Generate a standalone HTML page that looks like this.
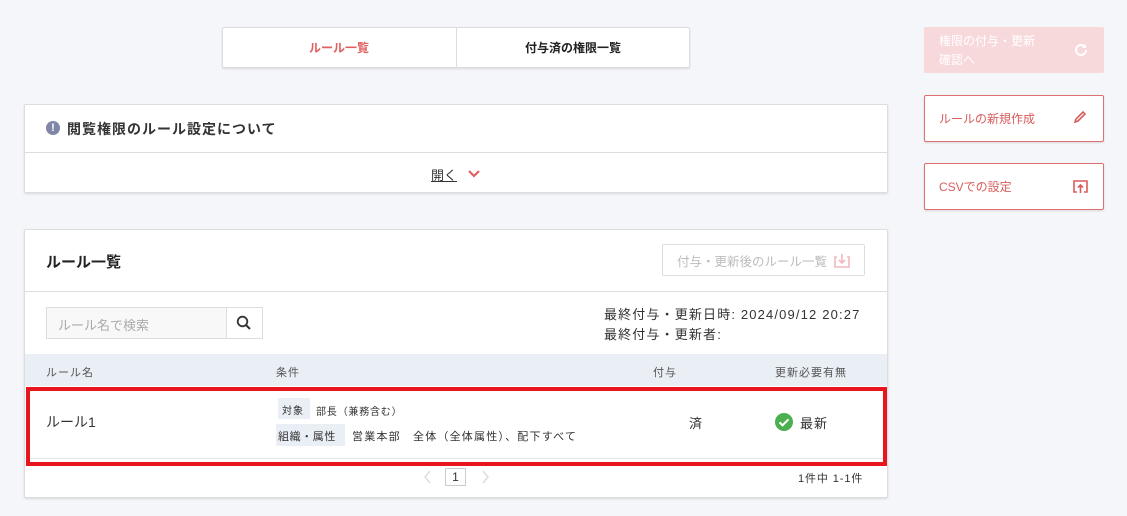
<!DOCTYPE html>
<html><head><meta charset="utf-8"><style>
*{box-sizing:border-box;margin:0;padding:0}
body{width:1127px;height:516px;background:#f5f6fa;font-family:"Liberation Sans","Noto Sans CJK JP",sans-serif;color:#333;position:relative;overflow:hidden;font-size:13px}
.a{position:absolute}
.card{position:absolute;background:#fff;border:1px solid #ddd;box-shadow:0 1px 2px rgba(0,0,0,.12);border-radius:2px}
.t{position:absolute;white-space:nowrap}
</style></head><body>
<div class="card" style="left:222px;top:27px;width:468px;height:41px"></div>
<div class="a" style="left:456px;top:28px;width:1px;height:39px;background:#ddd"></div>
<div class="t" style="left:222px;top:39px;width:234px;text-align:center;color:#e06060;font-size:12px;font-weight:bold">ルール一覧</div>
<div class="t" style="left:456px;top:39px;width:234px;text-align:center;color:#222;font-size:12px;font-weight:bold">付与済の権限一覧</div>

<div class="card" style="left:24px;top:104px;width:864px;height:89px"></div>
<div class="a" style="left:25px;top:152px;width:862px;height:1px;background:#ddd"></div>
<div class="a" style="left:46px;top:121px;width:14px;height:14px;border-radius:50%;background:#7f86a8;color:#fff;font-size:11px;font-weight:bold;text-align:center;line-height:14px">!</div>
<div class="t" style="left:67px;top:119px;font-size:14px;font-weight:bold;letter-spacing:1px;color:#333">閲覧権限のルール設定について</div>
<div class="t" style="left:431px;top:165px;font-size:13px;text-decoration:underline;color:#333">開く</div>
<svg class="a" style="left:467px;top:169px" width="14" height="9" viewBox="0 0 14 9"><path d="M2 2l5 5 5-5" stroke="#e06060" stroke-width="2.2" fill="none"/></svg>

<div class="card" style="left:24px;top:229px;width:864px;height:269px"></div>
<div class="t" style="left:46px;top:251px;font-size:15px;font-weight:bold;color:#222">ルール一覧</div>
<div class="a" style="left:662px;top:244px;width:203px;height:32px;border:1px solid #ddd;border-radius:2px;background:#fff"></div>
<div class="t" style="left:677px;top:251px;font-size:12.5px;color:#bbb">付与・更新後のルール一覧</div>
<svg class="a" style="left:834px;top:252px" width="16" height="16" viewBox="0 0 16 16"><path d="M3 5H1v10h14V5h-2M8 2v9M5 8l3 3 3-3" stroke="#f2b8bc" stroke-width="1.6" fill="none"/></svg>
<div class="a" style="left:25px;top:291px;width:862px;height:1px;background:#ddd"></div>
<div class="a" style="left:46px;top:307px;width:181px;height:32px;border:1px solid #ddd;background:#f8f8f8"></div>
<div class="t" style="left:58px;top:315px;font-size:13px;color:#aaa">ルール名で検索</div>
<div class="a" style="left:226px;top:307px;width:37px;height:32px;border:1px solid #ddd;background:#fff"></div>
<svg class="a" style="left:236px;top:315px" width="16" height="16" viewBox="0 0 16 16"><circle cx="6.5" cy="6.5" r="4.8" stroke="#333" stroke-width="1.8" fill="none"/><path d="M10 10l4 4" stroke="#333" stroke-width="2"/></svg>
<div class="t" style="left:604px;top:304px;font-size:13px;letter-spacing:1.15px;color:#333">最終付与・更新日時: 2024/09/12 20:27</div>
<div class="t" style="left:604px;top:324px;font-size:13px;letter-spacing:1.15px;color:#333">最終付与・更新者:</div>
<div class="a" style="left:25px;top:354px;width:862px;height:32px;background:#eaeef5"></div>
<div class="t" style="left:46px;top:364px;font-size:11px;color:#555;letter-spacing:1px">ルール名</div>
<div class="t" style="left:276px;top:364px;font-size:11px;color:#555;letter-spacing:1px">条件</div>
<div class="t" style="left:653px;top:364px;font-size:11px;color:#555;letter-spacing:1px">付与</div>
<div class="t" style="left:775px;top:364px;font-size:11px;color:#555;letter-spacing:1px">更新必要有無</div>
<div class="a" style="left:25px;top:458px;width:862px;height:1px;background:#e6e6e6"></div>
<div class="t" style="left:46px;top:412px;font-size:14px;color:#333">ルール1</div>
<div class="a" style="left:278px;top:398px;width:32px;height:21px;background:#eaeef5"></div>
<div class="t" style="left:282px;top:402px;font-size:10px;color:#333;letter-spacing:1px">対象</div>
<div class="t" style="left:316px;top:403px;font-size:10px;color:#333;letter-spacing:.8px">部長（兼務含む）</div>
<div class="a" style="left:276px;top:424px;width:69px;height:22px;background:#eaeef5"></div>
<div class="t" style="left:278px;top:428px;font-size:11px;color:#333;letter-spacing:.6px">組織・属性</div>
<div class="t" style="left:352px;top:428px;font-size:11px;color:#333;letter-spacing:1.2px">営業本部　全体（全体属性）、配下すべて</div>
<div class="t" style="left:689px;top:413px;font-size:13px;color:#333">済</div>
<svg class="a" style="left:775px;top:413px" width="18" height="18" viewBox="0 0 18 18"><circle cx="9" cy="9" r="9" fill="#4caf50"/><path d="M4.5 9.3l3 3 6-6" stroke="#fff" stroke-width="2" fill="none"/></svg>
<div class="t" style="left:800px;top:413px;font-size:13px;color:#333;letter-spacing:1px">最新</div>
<div class="a" style="left:26px;top:387px;width:861px;height:79px;border:4px solid #e8141e"></div>
<svg class="a" style="left:423px;top:470px" width="10" height="14" viewBox="0 0 10 14"><path d="M7 1L2 7l5 6" stroke="#ddd" stroke-width="1.5" fill="none"/></svg>
<div class="a" style="left:445px;top:468px;width:21px;height:18px;border:1px solid #ccc;background:#fff;font-size:12px;text-align:center;line-height:16px">1</div>
<svg class="a" style="left:480px;top:470px" width="10" height="14" viewBox="0 0 10 14"><path d="M3 1l5 6-5 6" stroke="#ddd" stroke-width="1.5" fill="none"/></svg>
<div class="t" style="left:798px;top:470px;font-size:11px;color:#333;letter-spacing:.9px">1件中 1-1件</div>

<div class="a" style="left:924px;top:27px;width:180px;height:46px;background:#f7d9dc;border-radius:2px"></div>
<div class="t" style="left:939px;top:32px;font-size:12px;color:#fff;line-height:19px">権限の付与・更新<br>確認へ</div>
<svg class="a" style="left:1073px;top:42px" width="16" height="16" viewBox="0 0 16 16"><path d="M13 8a5 5 0 1 1-1.5-3.6" stroke="#fff" stroke-width="2" fill="none"/><path d="M13 2v4h-4z" fill="#fff"/></svg>
<div class="card" style="left:924px;top:95px;width:180px;height:47px;border-color:#e07070"></div>
<div class="t" style="left:939px;top:110px;font-size:12px;color:#d85c5c">ルールの新規作成</div>
<svg class="a" style="left:1073px;top:110px" width="14" height="14" viewBox="0 0 14 14"><path d="M2 12l1-3 7-7 2 2-7 7z" stroke="#d85c5c" stroke-width="1.6" fill="none"/></svg>
<div class="card" style="left:924px;top:163px;width:180px;height:47px;border-color:#e07070"></div>
<div class="t" style="left:939px;top:178px;font-size:12px;color:#d85c5c">CSVでの設定</div>
<svg class="a" style="left:1073px;top:179px" width="15" height="15" viewBox="0 0 15 15"><path d="M4 13H1V2h13v11h-3M7.5 14V6M5 8.5l2.5-2.5 2.5 2.5" stroke="#d85c5c" stroke-width="1.6" fill="none"/></svg>
</body></html>
